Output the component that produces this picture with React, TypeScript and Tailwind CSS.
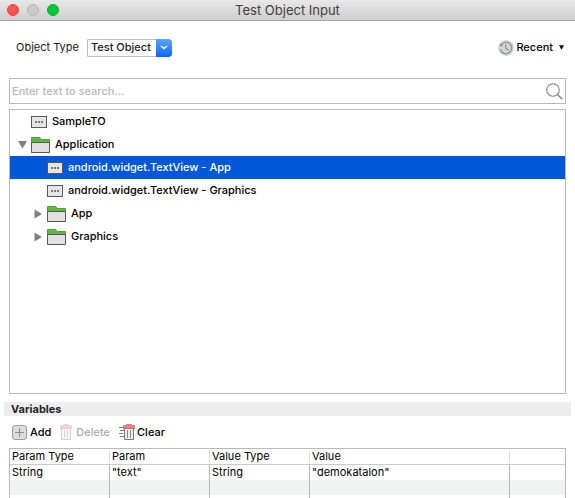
import React, { useState } from "react";

const GRAY = "#585858";

function ObjectIcon() {
  return (
    <svg width="16" height="12" viewBox="0 0 16 12" className="shrink-0" aria-hidden="true">
      <rect x="0.5" y="0.5" width="15" height="11" fill="#e4e4e4" stroke={GRAY} />
      <path d="M4 5h2v2H4zM7 5h2v2H7zM10 5h2v2h-2z" fill="#787878" />
    </svg>
  );
}

function FolderIcon() {
  return (
    <svg width="19" height="16" viewBox="0 0 19 16" className="shrink-0" aria-hidden="true">
      <path d="M0.5 15V0.5H8.5L10.5 2.5H18.5V15Z" fill="#5fb83c" stroke="#52a035" />
      <path d="M0.5 5.5H18.5V15.5H0.5Z" fill="#e2dfe0" stroke={GRAY} />
    </svg>
  );
}

function Arrow({ open }: { open: boolean }) {
  return (
    <svg width="10" height="10" viewBox="0 0 10 10" className="shrink-0" aria-hidden="true">
      <path d={open ? "M0 1H9L4.5 8.5Z" : "M0.5 0.5V9.5L8 5Z"} fill="#808080" />
    </svg>
  );
}

function ClockIcon() {
  return (
    <svg width="16" height="16" viewBox="0 0 16 16" aria-hidden="true">
      <circle cx="8" cy="8" r="8" fill="#d6d6d6" />
      <g fill="none" stroke="#858b93" strokeWidth="1.1">
        <path d="M3.1 5.1A5.7 5.7 0 1 1 2.4 8.8M4.2 12.3A5.7 5.7 0 0 0 8 13.7" />
        <path d="M7.7 4V8.2L10.8 10.2M1.8 4.4L3 5.8L4.8 5.3" />
      </g>
    </svg>
  );
}

function SearchIcon() {
  return (
    <svg width="17" height="17" viewBox="0 0 17 17" fill="none" stroke="#75808c" aria-hidden="true">
      <circle cx="7" cy="7" r="6.3" strokeWidth="1.1" />
      <path d="M11.5 11.5L16.3 16.3" strokeWidth="1.3" />
    </svg>
  );
}

function AddIcon() {
  return (
    <svg width="15" height="15" viewBox="0 0 15 15" aria-hidden="true">
      <rect x="0.5" y="0.5" width="14" height="14" rx="2.5" fill="#dcdcde" stroke="#9a9da5" />
      <path d="M7.5 3V12M3 7.5H12" stroke="#8a909a" />
    </svg>
  );
}

function TrashIcon({ lines = false }: { lines?: boolean }) {
  return (
    <svg
      width={lines ? 16 : 12}
      height="16"
      viewBox={lines ? "-4 0 16 16" : "0 0 12 16"}
      aria-hidden="true"
    >
      {lines && <path d="M-4 3.5H0M-3 6.5H1M-4 9.5H0M-3 12.5H1" stroke="#747b86" />}
      <path d="M1.5 4V15.5H10.5V4" fill="#ececee" stroke="#747b86" />
      <path d="M4.5 6V14M7.5 6V14" stroke="#858b95" />
      <path d="M0.5 4.5V1.5H3.5V0.5H8.5V1.5H11.5V4.5Z" fill="#fb7d79" stroke="#cf8083" />
      <path d="M0 4.5H12" stroke="#a9777c" />
    </svg>
  );
}

type Node = { label: string; level: number; folder?: boolean; open?: boolean };

const nodes: Node[] = [
  { label: "SampleTO", level: 1 },
  { label: "Application", level: 1, folder: true, open: true },
  { label: "android.widget.TextView - App", level: 2 },
  { label: "android.widget.TextView - Graphics", level: 2 },
  { label: "App", level: 2, folder: true },
  { label: "Graphics", level: 2, folder: true },
];

const columns = ["Param Type", "Param", "Value Type", "Value", ""];
const rows = [
  ["String", '"text"', "String", '"demokatalon"', ""],
  ["", "", "", "", ""],
  ["", "", "", "", ""],
];

export default function App() {
  const [selected, setSelected] = useState(2);
  return (
    <div className="flex h-screen flex-col overflow-hidden bg-white font-['Inter','Liberation_Sans',sans-serif] text-[11px] leading-[15px] font-medium text-[#1a1a1a]">
      <header className="grid h-[21px] shrink-0 grid-cols-[1fr_auto_1fr] items-center border-b border-[#a3a3a3] bg-linear-to-b from-[#e8e8e8] to-[#cecece]">
        <div className="flex gap-2 pl-[7px]">
          <button aria-label="Close" className="size-3 rounded-full border border-[#e2463f] bg-[#ff5350]" />
          <button aria-label="Minimize" className="size-3 rounded-full border border-[#b5b5b5] bg-[#cacaca]" />
          <button aria-label="Zoom" className="size-3 rounded-full border border-[#12ac28] bg-[#04c83b]" />
        </div>
        <h1 className="text-[13px] font-normal text-[#404040]">Test Object Input</h1>
      </header>

      <div className="flex h-[57px] shrink-0 items-center justify-between pr-[11px] pb-1 pl-4">
        <div className="flex items-center gap-2">
          <label htmlFor="object-type" className="font-normal">Object Type</label>
          <div className="relative">
            <select
              id="object-type"
              className="block h-[18px] w-[85px] appearance-none rounded-r border border-[#bdbdbd] bg-white pl-[3px] outline-none"
            >
              <option>Test Object</option>
            </select>
            <span className="pointer-events-none absolute inset-y-0 right-0 flex w-4 items-center justify-center rounded-r bg-linear-to-b from-[#58a5fb] to-[#0863f9]">
              <svg width="8" height="5" viewBox="0 0 8 5" fill="none" stroke="white" strokeWidth="1.4" aria-hidden="true">
                <path d="M1 1L4 3.6L7 1" />
              </svg>
            </span>
          </div>
        </div>
        <button className="flex items-center gap-[2px] text-black">
          <ClockIcon />
          <span>Recent</span>
          <svg width="5" height="5" viewBox="0 0 5 5" className="ml-1" aria-hidden="true">
            <path d="M0 0.3H5L2.5 4.8Z" fill="black" />
          </svg>
        </button>
      </div>

      <div className="mx-[9px] flex h-[26px] shrink-0 items-center border border-[#b9b9b9] pr-[2px] pl-[2px]">
        <input
          type="text"
          aria-label="Search"
          placeholder="Enter text to search..."
          className="min-w-0 flex-1 bg-transparent outline-none placeholder:text-[#b8b8b8]"
        />
        <button aria-label="Run search">
          <SearchIcon />
        </button>
      </div>

      <ul role="tree" aria-label="Test objects" className="mx-[9px] mt-[5px] min-h-0 flex-1 border border-[#b9b9b9]">
        {nodes.map((n, i) => (
          <li key={n.label} role="treeitem" aria-selected={i === selected}>
            <button
              onClick={() => setSelected(i)}
              className={`flex h-[23px] w-full items-center text-left ${n.level === 1 ? "pl-2" : "pl-6"} ${
                i === selected ? "bg-[#0058d8] text-white" : "text-black"
              }`}
            >
              <span className="flex w-[13px] shrink-0">{n.folder && <Arrow open={!!n.open} />}</span>
              {n.folder ? <FolderIcon /> : <ObjectIcon />}
              <span className="ml-[5px]">{n.label}</span>
            </button>
          </li>
        ))}
      </ul>

      <h2 className="mx-1 mt-2 h-[14px] shrink-0 bg-[#ededed] pl-[7px] leading-[14px] font-bold text-[#262626]">Variables</h2>

      <div className="flex h-8 shrink-0 items-center gap-[9px] pl-3 text-black">
        <button className="flex items-center gap-[3px]">
          <AddIcon />
          Add
        </button>
        <button disabled className="flex items-center gap-1 opacity-35">
          <TrashIcon />
          Delete
        </button>
        <button className="flex items-center gap-[2px]">
          <TrashIcon lines />
          Clear
        </button>
      </div>

      <div className="mx-[9px] h-[50px] shrink-0 overflow-hidden border-x border-t border-[#b9b9b9]">
        <table className="w-full table-fixed border-separate border-spacing-0 text-left text-black">
          <colgroup>
            <col className="w-[100px]" />
            <col className="w-[100px]" />
            <col className="w-[100px]" />
            <col className="w-[200px]" />
            <col />
          </colgroup>
          <thead>
            <tr>
              {columns.map((c, i) => (
                <th key={i} className="border-b border-[#cccccc] p-0 font-normal">
                  <div className={`my-[2px] h-[11px] pl-[2px] leading-[11px] ${i < 4 ? "border-r border-[#d9d9d9]" : ""}`}>{c}</div>
                </th>
              ))}
            </tr>
          </thead>
          <tbody>
            {rows.map((r, i) => (
              <tr key={i} className="even:bg-[#f1f3f3]">
                {r.map((v, j) => (
                  <td key={j} className={`h-[15px] p-0 pl-[2px] font-normal ${j < 4 ? "border-r border-[#b9b9b9]" : ""}`}>
                    {v}
                  </td>
                ))}
              </tr>
            ))}
          </tbody>
        </table>
      </div>
    </div>
  );
}
